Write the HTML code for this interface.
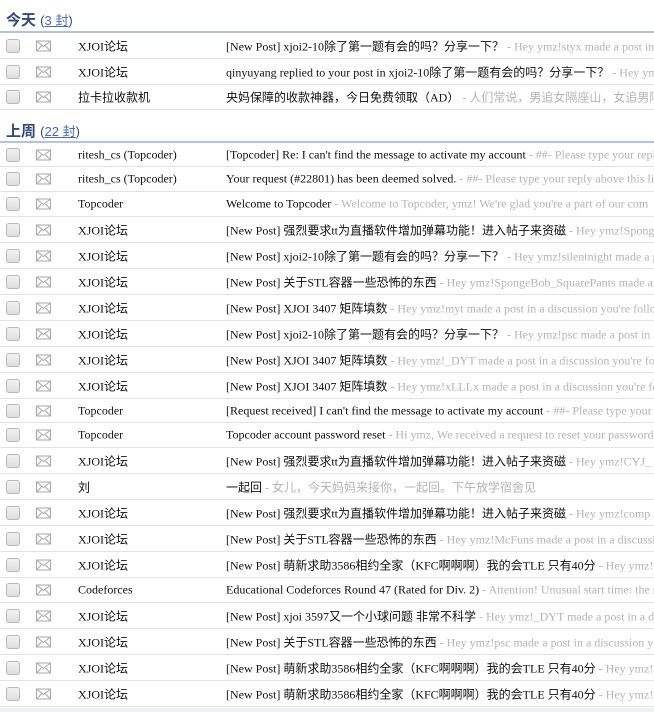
<!DOCTYPE html>
<html><head><meta charset="utf-8"><style>
body{margin:0;width:654px;height:712px;overflow:hidden;background:#fff;font-family:"Liberation Serif","Noto Sans CJK SC",sans-serif;font-size:12px;color:#111}
.h{height:30px;position:relative}
.h span.t{position:absolute;left:6px;top:8px;font-family:"Liberation Sans","Noto Sans CJK SC",sans-serif;font-weight:bold;font-size:15px;color:#34497a}
.h span.c{font-family:"Liberation Sans","Noto Sans CJK SC",sans-serif;font-weight:normal;font-size:13px;color:#34497a}
.h span.c u{color:#4a6aa8}
.line{height:2px;background:#b4c4e0}
.r{position:relative;border-bottom:1px solid #e2e2e2;white-space:nowrap;overflow:hidden;box-sizing:border-box}
.r>*{position:absolute;top:50%;transform:translateY(-50%)}
.cb{left:6px;width:12px;height:12px;border:1px solid #b8b8b8;border-radius:3px;background:linear-gradient(#f2f2f2,#dedede)}
.env{left:36px;width:15px;height:11px}
.s{left:78px}
.sub{left:226px}
.g{color:#b4b4b4}
.foot{position:absolute;left:0;top:708px;width:654px;height:4px;background:#eef0f6}
</style></head><body>
<div style="height:1px"></div>
<div class="h"><span class="t">今天 <span class="c">(<u>3 封</u>)</span></span></div>
<div class="line"></div>
<div id="g1"></div>
<div class="h" style="height:31px"><span class="t" style="top:10px">上周 <span class="c">(<u>22 封</u>)</span></span></div>
<div class="line"></div>
<div id="g2"></div>
<div class="foot"></div>
<script>
var env='<svg class="env" viewBox="0 0 15 11"><rect x="0.5" y="0.5" width="14" height="10" fill="#fbfbfb" stroke="#aaa"/><path d="M0.5 0.5L7.5 6L14.5 0.5M0.5 10.5L5.5 5.5M14.5 10.5L9.5 5.5" fill="none" stroke="#aaa"/></svg>';
function row(h,s,a,b){return '<div class="r" style="height:'+h+'px"><div class="cb"></div>'+env+'<span class="s">'+s+'</span><span class="sub">'+a+' <span class="g">- '+b+'</span></span></div>';}
var g1=[[26,'XJOI论坛','[New Post] xjoi2-10除了第一题有会的吗？分享一下？','Hey ymz!styx made a post in'],
[26,'XJOI论坛','qinyuyang replied to your post in xjoi2-10除了第一题有会的吗？分享一下？','Hey ymz'],
[25,'拉卡拉收款机','央妈保障的收款神器，今日免费领取（AD）','人们常说，男追女隔座山，女追男隔']];
var g2=[[24,'ritesh_cs (Topcoder)','[Topcoder] Re: I can\'t find the message to activate my account','##- Please type your reply'],
[25,'ritesh_cs (Topcoder)','Your request (#22801) has been deemed solved.','##- Please type your reply above this line'],
[25,'Topcoder','Welcome to Topcoder','Welcome to Topcoder, ymz! We\'re glad you\'re a part of our com'],
[26,'XJOI论坛','[New Post] 强烈要求tt为直播软件增加弹幕功能！进入帖子来资磁','Hey ymz!Spong'],
[26,'XJOI论坛','[New Post] xjoi2-10除了第一题有会的吗？分享一下？','Hey ymz!silentnight made a p'],
[26,'XJOI论坛','[New Post] 关于STL容器一些恐怖的东西','Hey ymz!SpongeBob_SquarePants made a p'],
[26,'XJOI论坛','[New Post] XJOI 3407 矩阵填数','Hey ymz!myt made a post in a discussion you\'re follo'],
[26,'XJOI论坛','[New Post] xjoi2-10除了第一题有会的吗？分享一下？','Hey ymz!psc made a post in a'],
[26,'XJOI论坛','[New Post] XJOI 3407 矩阵填数','Hey ymz!_DYT made a post in a discussion you\'re fo'],
[26,'XJOI论坛','[New Post] XJOI 3407 矩阵填数','Hey ymz!xLLLx made a post in a discussion you\'re fo'],
[24,'Topcoder','[Request received] I can\'t find the message to activate my account','##- Please type your'],
[25,'Topcoder','Topcoder account password reset','Hi ymz, We received a request to reset your password'],
[26,'XJOI论坛','[New Post] 强烈要求tt为直播软件增加弹幕功能！进入帖子来资磁','Hey ymz!CYJ_'],
[26,'刘','一起回','女儿，今天妈妈来接你，一起回。下午放学宿舍见'],
[26,'XJOI论坛','[New Post] 强烈要求tt为直播软件增加弹幕功能！进入帖子来资磁','Hey ymz!comp'],
[26,'XJOI论坛','[New Post] 关于STL容器一些恐怖的东西','Hey ymz!McFuns made a post in a discussi'],
[26,'XJOI论坛','[New Post] 萌新求助3586相约全家（KFC啊啊啊）我的会TLE 只有40分','Hey ymz!'],
[25,'Codeforces','Educational Codeforces Round 47 (Rated for Div. 2)','Attention! Unusual start time: the r'],
[26,'XJOI论坛','[New Post] xjoi 3597又一个小球问题 非常不科学','Hey ymz!_DYT made a post in a d'],
[26,'XJOI论坛','[New Post] 关于STL容器一些恐怖的东西','Hey ymz!psc made a post in a discussion yo'],
[26,'XJOI论坛','[New Post] 萌新求助3586相约全家（KFC啊啊啊）我的会TLE 只有40分','Hey ymz!'],
[26,'XJOI论坛','[New Post] 萌新求助3586相约全家（KFC啊啊啊）我的会TLE 只有40分','Hey ymz!']];
document.getElementById('g1').innerHTML=g1.map(function(x){return row.apply(null,x)}).join('');
document.getElementById('g2').innerHTML=g2.map(function(x){return row.apply(null,x)}).join('');
</script>
</body></html>
